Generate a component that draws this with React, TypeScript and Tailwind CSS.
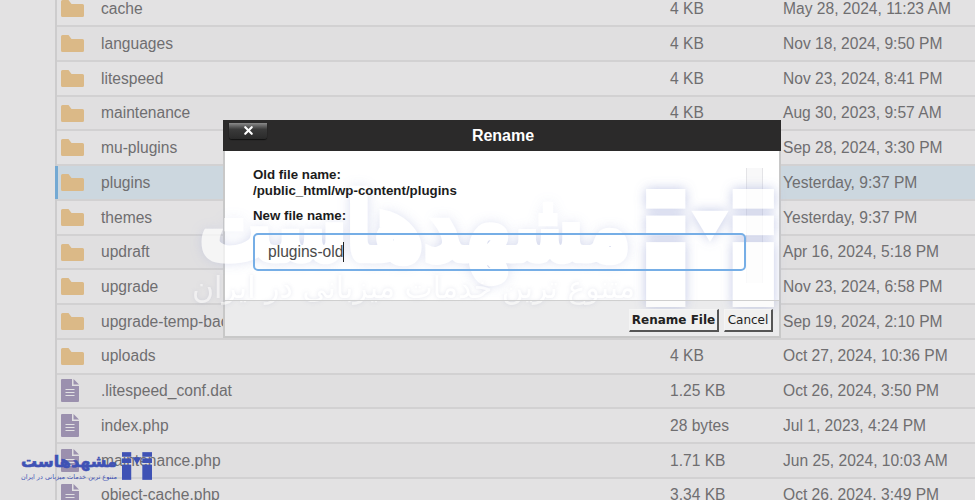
import { X } from 'lucide-react';

type Row = { name: string; size: string; date: string; kind: 'dir' | 'file'; selected?: boolean };

const rows: Row[] = [
  { name: 'cache', size: '4 KB', date: 'May 28, 2024, 11:23 AM', kind: 'dir' },
  { name: 'languages', size: '4 KB', date: 'Nov 18, 2024, 9:50 PM', kind: 'dir' },
  { name: 'litespeed', size: '4 KB', date: 'Nov 23, 2024, 8:41 PM', kind: 'dir' },
  { name: 'maintenance', size: '4 KB', date: 'Aug 30, 2023, 9:57 AM', kind: 'dir' },
  { name: 'mu-plugins', size: '4 KB', date: 'Sep 28, 2024, 3:30 PM', kind: 'dir' },
  { name: 'plugins', size: '4 KB', date: 'Yesterday, 9:37 PM', kind: 'dir', selected: true },
  { name: 'themes', size: '4 KB', date: 'Yesterday, 9:37 PM', kind: 'dir' },
  { name: 'updraft', size: '4 KB', date: 'Apr 16, 2024, 5:18 PM', kind: 'dir' },
  { name: 'upgrade', size: '4 KB', date: 'Nov 23, 2024, 6:58 PM', kind: 'dir' },
  { name: 'upgrade-temp-backup', size: '4 KB', date: 'Sep 19, 2024, 2:10 PM', kind: 'dir' },
  { name: 'uploads', size: '4 KB', date: 'Oct 27, 2024, 10:36 PM', kind: 'dir' },
  { name: '.litespeed_conf.dat', size: '1.25 KB', date: 'Oct 26, 2024, 3:50 PM', kind: 'file' },
  { name: 'index.php', size: '28 bytes', date: 'Jul 1, 2023, 4:24 PM', kind: 'file' },
  { name: 'maintenance.php', size: '1.71 KB', date: 'Jun 25, 2024, 10:03 AM', kind: 'file' },
  { name: 'object-cache.php', size: '3.34 KB', date: 'Oct 26, 2024, 3:49 PM', kind: 'file' },
];

function FolderIcon() {
  return (
    <svg width="23" height="17" viewBox="0 0 23 17">
      <path d="M1.5 0H7.5L10.5 4H21.5Q23 4 23 5.5V15.5Q23 17 21.5 17H1.5Q0 17 0 15.5V1.5Q0 0 1.5 0Z" fill="#dbb987" />
    </svg>
  );
}

function FileIcon() {
  return (
    <svg width="18" height="23" viewBox="0 0 18 23">
      <path d="M1 0H11V7H18V22Q18 23 17 23H1Q0 23 0 22V1Q0 0 1 0Z" fill="#9b90ae" />
      <path d="M12.5 0L18 5.5H12.5Z" fill="#9b90ae" />
      <path d="M4.5 10.5H13.5M4.5 13.5H13.5M4.5 16.5H13.5" stroke="#e2e1e3" strokeWidth="1.2" />
    </svg>
  );
}

function LogoMark({ className, color }: { className: string; color: string }) {
  return (
    <svg className={className} viewBox="0 0 130 120" fill={color}>
      <rect x="0" y="0" width="40" height="20" />
      <rect x="0" y="27" width="40" height="20" />
      <rect x="0" y="54" width="40" height="66" />
      <rect x="88" y="0" width="42" height="20" />
      <rect x="88" y="27" width="42" height="20" />
      <rect x="88" y="54" width="42" height="66" />
      <path d="M46 22H84L65 54Z" />
    </svg>
  );
}

export default function App() {
  return (
    <div className="relative h-[500px] w-[975px] overflow-hidden bg-[#e3e2e3] font-['Liberation_Sans',Arial,sans-serif]">
      {/* File list */}
      <div className="-mt-[7.4px] ml-[55px] border-l-2 border-[#cdcccd]">
        {rows.map((row, i) => (
          <div
            key={row.name}
            className={
              'relative flex h-[34.73px] items-center border-b-2 border-[#d2d1d2] text-[15.6px] text-[#6f6e70] ' +
              (row.selected ? 'bg-[#ccd7df]' : i % 2 ? 'bg-[#e0dfe0]' : 'bg-[#e3e2e3]')
            }
          >
            {row.selected && <div className="absolute -left-[2px] top-0 h-full w-[3px] bg-[#74a9d3]" />}
            <div className="flex w-[44px] justify-start pl-[4px]">
              {row.kind === 'dir' ? <FolderIcon /> : <FileIcon />}
            </div>
            <div className="w-[569px] whitespace-nowrap">{row.name}</div>
            <div className="w-[113px] whitespace-nowrap">{row.size}</div>
            <div className="whitespace-nowrap">{row.date}</div>
          </div>
        ))}
      </div>

      {/* Rename dialog */}
      <div className="absolute left-[223px] top-[120px] flex h-[218px] w-[558px] flex-col border-x-2 border-b-2 border-[#c8c8c8] bg-white">
        <div className="relative -mx-[2px] flex h-[31px] shrink-0 items-center justify-center bg-[#2b2a2a] pl-[2px]">
          <div className="absolute left-[6px] top-[3px] flex h-[16px] w-[38px] justify-center rounded-b-[3px] bg-gradient-to-b from-[#8b8b8b] from-0% via-[#3a3a3a] via-40% to-[#2a2a2a] shadow-[0_1px_1px_#111]">
            <X className="mt-[1px] h-[13px] w-[13px] text-white" strokeWidth={4} />
          </div>
          <span className="text-[16px] font-bold text-white">Rename</span>
        </div>
        <div className="relative flex-1 px-[28px] pt-[16px]">
          <div className="absolute left-[521px] top-[17px] h-[115px] w-[17px] border-x border-[#e4e4e7] bg-[#f8f8f9]" />
          <div className="relative z-10 text-[13.3px] font-bold leading-[16px] text-[#1c1c1c]">
            <div>Old file name:</div>
            <div>/public_html/wp-content/plugins</div>
            <div className="mt-[9px]">New file name:</div>
            <div className="mt-[9px] flex h-[38px] w-[493px] items-center rounded-[5px] border-2 border-[#76aee6] pl-[13px] text-[15.6px] font-normal text-[#4a4a4a]">
              plugins-old<span className="h-[20px] w-px bg-[#222]" />
            </div>
          </div>
        </div>
        <div className="relative z-10 flex h-[36px] shrink-0 items-start justify-end gap-[5px] border-t border-[#cfcfcf] pr-[6px] pt-[8px] font-['DejaVu_Sans',sans-serif] leading-none text-[#222]">
          <div className="flex h-[23px] w-[90px] items-center justify-center whitespace-nowrap border border-b-2 border-r-2 border-[#f4f4f4] border-b-[#555] border-r-[#555] bg-[#f0f0f0] text-[12px] font-bold">
            Rename File
          </div>
          <div className="flex h-[23px] w-[49px] items-center justify-center border border-b-2 border-r-2 border-[#f4f4f4] border-b-[#555] border-r-[#555] bg-[#f0f0f0] text-[12px]">
            Cancel
          </div>
        </div>
        <div className="absolute bottom-0 left-0 right-0 h-[36px] bg-[#ebebec]" />
      </div>

      {/* Center watermark */}
      <div className="pointer-events-none absolute left-[195px] top-[182px] flex h-[130px] w-[590px] items-start">
        <div className="w-[440px] text-center font-['DejaVu_Sans',sans-serif] text-white" dir="rtl">
          <div className="scale-y-[1.3] whitespace-nowrap text-[72px] font-bold leading-[92px] opacity-70 [-webkit-text-stroke:5px_white] [text-shadow:0_0_12px_rgba(170,178,220,0.9)]">مشهدهاست</div>
          <div className="-mt-[2px] whitespace-nowrap text-[30px] leading-[32px] opacity-50 [text-shadow:0_0_4px_rgba(150,155,190,0.5)]">متنوع ترین خدمات میزبانی در ایران</div>
        </div>
        <LogoMark className="ml-[10px] mt-[7px] h-[118px] w-[130px] opacity-80 drop-shadow-[0_0_6px_rgba(170,178,220,0.9)]" color="#ffffff" />
      </div>

      {/* Corner logo */}
      <div className="pointer-events-none absolute left-[20px] top-[452px] flex items-start gap-[4px]">
        <div className="w-[98px] text-center font-['DejaVu_Sans',sans-serif] text-[#3f52b5]" dir="rtl">
          <div className="whitespace-nowrap text-[16px] font-bold leading-[20px] [-webkit-text-stroke:0.6px_#3f52b5]">مشهدهاست</div>
          <div className="mt-[1px] whitespace-nowrap text-[6.5px] leading-[8px]">متنوع ترین خدمات میزبانی در ایران</div>
        </div>
        <LogoMark className="h-[28px] w-[30px]" color="#3f52b5" />
      </div>
    </div>
  );
}
